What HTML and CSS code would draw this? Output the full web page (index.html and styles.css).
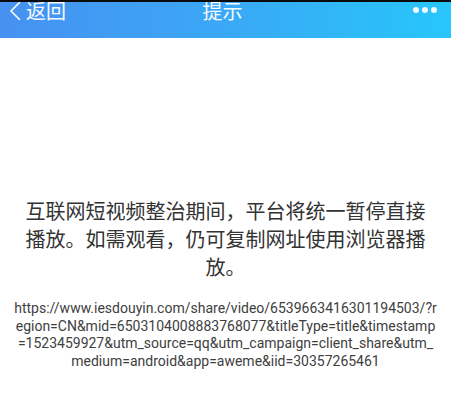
FILE: index.html
```html
<!DOCTYPE html>
<html lang="zh-CN">
<head>
<meta charset="utf-8">
<title>提示</title>
<link rel="stylesheet" href="styles.css">
</head>
<body>
<div class="page">
  <header class="topbar">
    <div class="statusline"></div>
    <div class="bar-row">
      <div class="back">
        <svg class="chev" width="14" height="20" viewBox="0 0 14 20"><path d="M11.5 1.5 L3 10 L11.5 18.5" fill="none" stroke="#fff" stroke-width="1.6" stroke-linecap="round" stroke-linejoin="round"/></svg>
        <span class="back-text">返回</span>
      </div>
      <div class="title">提示</div>
      <div class="more"><i></i><i></i><i></i></div>
    </div>
  </header>
  <main class="content">
    <p class="notice">互联网短视频整治期间，平台将统一暂停直接<br>播放。如需观看，仍可复制网址使用浏览器播<br>放。</p>
    <p class="url">
      <span>https://www.iesdouyin.com/share/video/6539663416301194503/?r</span>
      <span>egion=CN&amp;mid=6503104008883768077&amp;titleType=title&amp;timestamp</span>
      <span>=1523459927&amp;utm_source=qq&amp;utm_campaign=client_share&amp;utm_</span>
      <span>medium=android&amp;app=aweme&amp;iid=30357265461</span>
    </p>
  </main>
</div>
</body>
</html>
```

FILE: styles.css
```css
html, body {
  margin: 0;
  padding: 0;
  background: #ffffff;
}
body {
  width: 451px;
  height: 399px;
  overflow: hidden;
  font-family: "Noto Sans CJK SC", "Noto Sans", sans-serif;
}
.page {
  display: flex;
  flex-direction: column;
}
.topbar {
  position: relative;
  height: 38px;
  background: linear-gradient(90deg, #4791f1 0%, #3aa8f6 50%, #27c6fb 100%);
  color: #fff;
}
.statusline {
  position: absolute;
  left: 0;
  top: 0;
  right: 0;
  height: 2px;
  background: #0b0b0b;
  z-index: 1;
}
.bar-row {
  position: relative;
  display: flex;
  align-items: center;
  justify-content: space-between;
  height: 21px;
  padding: 0 14px 0 8px;
}
.back {
  display: flex;
  align-items: center;
  gap: 4px;
  width: 80px;
}
.chev {
  display: block;
  margin-top: 1px;
}
.back-text, .title {
  font-size: 20px;
  line-height: 21px;
  color: #f4f9ff;
}
.title {
  flex: 1;
  text-align: center;
}
.more {
  width: 80px;
  display: flex;
  justify-content: flex-end;
  align-items: center;
  gap: 3px;
  margin-top: -2px;
}
.more i {
  display: block;
  width: 6px;
  height: 6px;
  border-radius: 50%;
  background: #f2f8ff;
}
.content {
  display: flex;
  flex-direction: column;
  align-items: center;
  padding-top: 159px;
}
.notice {
  margin: 0;
  font-size: 20px;
  line-height: 28px;
  color: #333333;
  text-align: center;
}
.url {
  margin: 19px 0 0;
  font-family: Roboto, "Noto Sans", sans-serif;
  font-size: 14px;
  line-height: 17.7px;
  color: #404040;
  text-align: center;
  display: flex;
  flex-direction: column;
  align-items: center;
}
.url span {
  display: block;
  white-space: nowrap;
}
```
